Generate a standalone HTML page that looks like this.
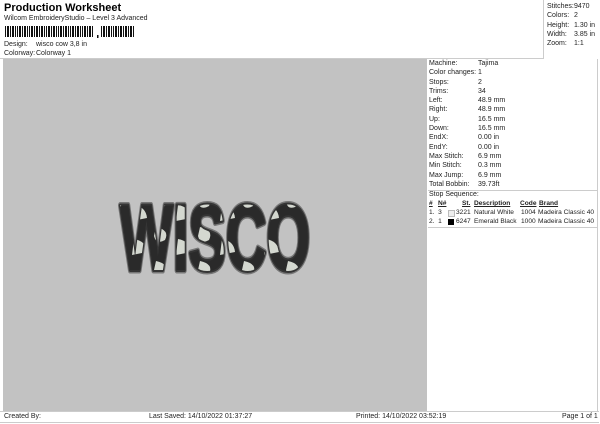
<!DOCTYPE html>
<html><head><style>
body{margin:0;width:600px;height:424px;background:#fff;font-family:"Liberation Sans",sans-serif;font-size:7px;color:#222;position:relative;overflow:hidden}
.a{position:absolute;white-space:nowrap}
.r td{padding:0;height:9.3px;line-height:9.3px}
.s{font-size:6.6px}
</style></head><body>
<div class="a" style="left:0;top:0;width:543px;height:58px;border:1px solid #ccc;border-left:none;border-top:none"></div>
<div class="a" style="left:4px;top:2px;font-size:11px;font-weight:bold;color:#000">Production Worksheet</div>
<div class="a" style="left:4px;top:15px">Wilcom EmbroideryStudio – Level 3 Advanced</div>
<svg class="a" style="left:5px;top:26px" width="130" height="13">
<g fill="#111">
<rect x="0" y="0" width="1" height="11"/><rect x="2" y="0" width="2" height="11"/><rect x="5" y="0" width="1" height="11"/><rect x="7" y="0" width="2" height="11"/><rect x="10" y="0" width="1" height="11"/><rect x="12" y="0" width="1" height="11"/><rect x="14" y="0" width="2" height="11"/><rect x="17" y="0" width="1" height="11"/><rect x="19" y="0" width="2" height="11"/><rect x="22" y="0" width="1" height="11"/><rect x="24" y="0" width="1" height="11"/><rect x="26" y="0" width="2" height="11"/><rect x="29" y="0" width="1" height="11"/><rect x="31" y="0" width="2" height="11"/><rect x="34" y="0" width="1" height="11"/><rect x="36" y="0" width="2" height="11"/><rect x="39" y="0" width="1" height="11"/><rect x="41" y="0" width="1" height="11"/><rect x="43" y="0" width="2" height="11"/><rect x="46" y="0" width="1" height="11"/><rect x="48" y="0" width="2" height="11"/><rect x="51" y="0" width="1" height="11"/><rect x="53" y="0" width="1" height="11"/><rect x="55" y="0" width="2" height="11"/><rect x="58" y="0" width="1" height="11"/><rect x="60" y="0" width="2" height="11"/><rect x="63" y="0" width="1" height="11"/><rect x="65" y="0" width="1" height="11"/><rect x="67" y="0" width="2" height="11"/><rect x="70" y="0" width="1" height="11"/><rect x="72" y="0" width="2" height="11"/><rect x="75" y="0" width="1" height="11"/><rect x="77" y="0" width="1" height="11"/><rect x="79" y="0" width="2" height="11"/><rect x="82" y="0" width="1" height="11"/><rect x="84" y="0" width="2" height="11"/><rect x="87" y="0" width="1" height="11"/>
<rect x="92" y="9" width="1.5" height="3"/>
<rect x="96" y="0" width="1" height="11"/><rect x="98" y="0" width="2" height="11"/><rect x="101" y="0" width="1" height="11"/><rect x="103" y="0" width="2" height="11"/><rect x="106" y="0" width="1" height="11"/><rect x="108" y="0" width="1" height="11"/><rect x="110" y="0" width="2" height="11"/><rect x="113" y="0" width="1" height="11"/><rect x="115" y="0" width="2" height="11"/><rect x="118" y="0" width="1" height="11"/><rect x="120" y="0" width="2" height="11"/><rect x="123" y="0" width="1" height="11"/><rect x="125" y="0" width="2" height="11"/><rect x="128" y="0" width="1" height="11"/>
</g></svg>
<div class="a" style="left:4px;top:41px">Design:</div><div class="a" style="left:36px;top:41px">wisco cow 3,8 in</div>
<div class="a" style="left:4px;top:50px">Colorway:</div><div class="a" style="left:36px;top:50px">Colorway 1</div>

<div class="a" style="left:543px;top:0;width:56px;height:58px;border-left:1px solid #ccc"></div>
<table class="a r" style="left:547px;top:2px;border-collapse:collapse;font-size:7px">
<tr><td style="width:27px">Stitches:</td><td>9470</td></tr>
<tr><td>Colors:</td><td>2</td></tr>
<tr><td>Height:</td><td>1.30 in</td></tr>
<tr><td>Width:</td><td>3.85 in</td></tr>
<tr><td>Zoom:</td><td>1:1</td></tr></table>

<div class="a" style="left:3px;top:59px;width:424px;height:352px;background:#c2c2c2"></div>
<div class="a" style="left:427px;top:59px;width:170px;height:352px;border-right:1px solid #ccc"></div>
<svg class="a" style="left:110px;top:190px" width="210" height="90">
<defs><pattern id="p" width="44" height="34" patternUnits="userSpaceOnUse"><rect width="44" height="34" fill="#2a2a2a"/><path d="M2 3 q14 3 9 13 q-9 5 -11 -4z M24 15 q12 2 13 13 l-15 3z" fill="#d4d8d0"/></pattern></defs>
<text x="105" y="80" text-anchor="middle" font-family="Liberation Sans, sans-serif" font-weight="bold" font-size="94" textLength="190" lengthAdjust="spacingAndGlyphs" fill="url(#p)" stroke="#777" stroke-width="7" stroke-linejoin="round" paint-order="stroke">WISCO</text>
<text x="105" y="80" text-anchor="middle" font-family="Liberation Sans, sans-serif" font-weight="bold" font-size="94" textLength="190" lengthAdjust="spacingAndGlyphs" fill="none" stroke="#2a2a2a" stroke-width="4" stroke-linejoin="round" opacity="0.85">WISCO</text>
<text x="105" y="80" text-anchor="middle" font-family="Liberation Sans, sans-serif" font-weight="bold" font-size="94" textLength="190" lengthAdjust="spacingAndGlyphs" fill="url(#p)">WISCO</text>
</svg>

<table class="a r" style="left:429px;top:59px;border-collapse:collapse;font-size:7px">
<tr><td style="width:49px">Machine:</td><td>Tajima</td></tr>
<tr><td>Color changes:</td><td>1</td></tr>
<tr><td>Stops:</td><td>2</td></tr>
<tr><td>Trims:</td><td>34</td></tr>
<tr><td>Left:</td><td>48.9 mm</td></tr>
<tr><td>Right:</td><td>48.9 mm</td></tr>
<tr><td>Up:</td><td>16.5 mm</td></tr>
<tr><td>Down:</td><td>16.5 mm</td></tr>
<tr><td>EndX:</td><td>0.00 in</td></tr>
<tr><td>EndY:</td><td>0.00 in</td></tr>
<tr><td>Max Stitch:</td><td>6.9 mm</td></tr>
<tr><td>Min Stitch:</td><td>0.3 mm</td></tr>
<tr><td>Max Jump:</td><td>6.9 mm</td></tr>
<tr><td>Total Bobbin:</td><td>39.73ft</td></tr></table>
<div class="a" style="left:428px;top:190px;width:169px;border-top:1px solid #ccc"></div>
<div class="a" style="left:429px;top:191px">Stop Sequence:</div>
<div class="a s" style="left:429px;top:200px;font-weight:bold;text-decoration:underline">#</div>
<div class="a s" style="left:438px;top:200px;font-weight:bold;text-decoration:underline">N#</div>
<div class="a s" style="left:462px;top:200px;font-weight:bold;text-decoration:underline">St.</div>
<div class="a s" style="left:474px;top:200px;font-weight:bold;text-decoration:underline">Description</div>
<div class="a s" style="left:520px;top:200px;font-weight:bold;text-decoration:underline">Code</div>
<div class="a s" style="left:539px;top:200px;font-weight:bold;text-decoration:underline">Brand</div>
<div class="a s" style="left:429px;top:209px">1.&nbsp; 3</div>
<div class="a" style="left:448px;top:210px;width:5px;height:5px;background:#eee;border:1px solid #bbb"></div>
<div class="a s" style="left:456px;top:209px">3221</div><div class="a s" style="left:474px;top:209px">Natural White</div><div class="a s" style="left:521px;top:209px">1004</div><div class="a s" style="left:538px;top:209px">Madeira Classic 40</div>
<div class="a s" style="left:429px;top:218px">2.&nbsp; 1</div>
<div class="a" style="left:448px;top:219px;width:6px;height:6px;background:#000"></div>
<div class="a s" style="left:456px;top:218px">6247</div><div class="a s" style="left:474px;top:218px">Emerald Black</div><div class="a s" style="left:521px;top:218px">1000</div><div class="a s" style="left:538px;top:218px">Madeira Classic 40</div>
<div class="a" style="left:428px;top:227px;width:169px;border-top:1px solid #ccc"></div>

<div class="a" style="left:0;top:411px;width:599px;border-top:1px solid #ccc"></div>
<div class="a" style="left:4px;top:413px">Created By:</div>
<div class="a" style="left:149px;top:413px">Last Saved: 14/10/2022 01:37:27</div>
<div class="a" style="left:356px;top:413px">Printed: 14/10/2022 03:52:19</div>
<div class="a" style="left:562px;top:413px">Page 1 of 1</div>
<div class="a" style="left:0;top:422px;width:599px;border-top:1px solid #ccc"></div>
</body></html>
